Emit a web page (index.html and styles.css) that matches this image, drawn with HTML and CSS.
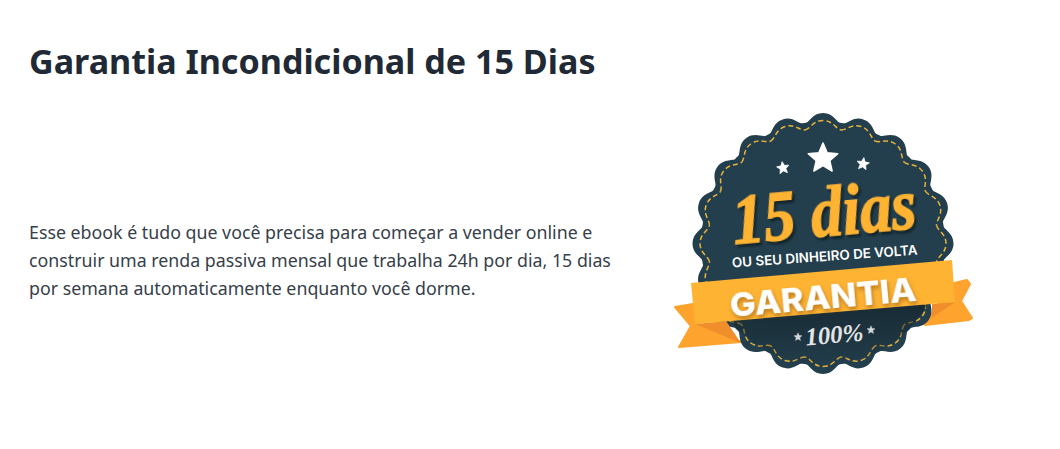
FILE: index.html
```html
<html>

<head>
    <meta charset="utf-8">
    <link rel="stylesheet" href="styles.css">
</head>

<body>
    <div class="section">
        <h1>Garantia Incondicional de 15 Dias</h1>
        <div class="row">
            <p>Esse ebook é tudo que você precisa para começar a vender online e construir uma renda passiva mensal que trabalha 24h por dia, 15 dias por semana automaticamente enquanto você dorme.</p>
            <svg class="badge" viewBox="668 108 310 270" width="310" height="270">
                <defs>
                    <path id="bump" class="navy" d="M-18.9 -119.5C-13.9 -120.3 -11 -130.5 0 -130.5C11 -130.5 13.9 -120.3 18.9 -119.5Z" />
                    <path id="stitch" class="stitch" d="M-18 -113.6C-13 -114.4 -10 -123 0 -123C10 -123 13 -114.4 18 -113.6" />
                    <polygon id="star" class="star" points="0,-10 2.7,-3.72 9.51,-3.09 4.37,1.42 5.88,8.09 0,4.6 -5.88,8.09 -4.37,1.42 -9.51,-3.09 -2.7,-3.72" />
                    <g id="wave">
                        <use href="#bump" />
                        <use href="#stitch" />
                    </g>
                    <linearGradient id="under" x1="0" y1="0" x2="0" y2="1">
                        <stop offset="0" stop-color="#13232b" stop-opacity=".75" />
                        <stop offset="1" stop-color="#13232b" stop-opacity="0" />
                    </linearGradient>
                    <clipPath id="seal">
                        <circle cx="823" cy="243.5" r="121" />
                    </clipPath>
                </defs>

                <polygon class="tail" points="675,307 693,304 697,323 741,342 679,347 691,326" />
                <polygon class="tail" points="950,284 967,280 970,284 961,301 972,318 969,320 925,325" />

                <g transform="translate(823 243.5)">
                    <circle class="navy" r="122" />
                    <use href="#wave" />
                    <use href="#wave" transform="rotate(18)" />
                    <use href="#wave" transform="rotate(36)" />
                    <use href="#wave" transform="rotate(54)" />
                    <use href="#wave" transform="rotate(72)" />
                    <use href="#wave" transform="rotate(90)" />
                    <use href="#wave" transform="rotate(108)" />
                    <use href="#wave" transform="rotate(126)" />
                    <use href="#wave" transform="rotate(144)" />
                    <use href="#wave" transform="rotate(162)" />
                    <use href="#wave" transform="rotate(180)" />
                    <use href="#wave" transform="rotate(198)" />
                    <use href="#wave" transform="rotate(216)" />
                    <use href="#wave" transform="rotate(234)" />
                    <use href="#wave" transform="rotate(252)" />
                    <use href="#wave" transform="rotate(270)" />
                    <use href="#wave" transform="rotate(288)" />
                    <use href="#wave" transform="rotate(306)" />
                    <use href="#wave" transform="rotate(324)" />
                    <use href="#wave" transform="rotate(342)" />
                </g>

                <polygon points="695,324 955,302 955,350 695,372" fill="url(#under)" clip-path="url(#seal)" />

                <polygon class="fold" points="695,324 741,343 726,321" />
                <polygon class="fold" points="955,302 932,318 932,304" />
                <polygon class="band" points="691,283 952,260 955,302 695,324" />

                <use href="#star" transform="translate(823 158.5) scale(1.55)" />
                <use href="#star" transform="translate(783 168) rotate(-8) scale(.65)" />
                <use href="#star" transform="translate(863 164) rotate(8) scale(.65)" />

                <text class="days" transform="translate(826 236) rotate(-5)" text-anchor="middle" textLength="184" lengthAdjust="spacingAndGlyphs">15 dias</text>
                <text class="back" transform="translate(825 261) rotate(-4)" text-anchor="middle" textLength="186" lengthAdjust="spacingAndGlyphs">OU SEU DINHEIRO DE VOLTA</text>
                <text class="title" transform="translate(824 309) rotate(-5)" text-anchor="middle" textLength="187" lengthAdjust="spacingAndGlyphs">GARANTIA</text>
                <text class="percent" transform="translate(835 343) rotate(-5)" text-anchor="middle">100%</text>
                <use href="#star" class="mini" transform="translate(798 337) scale(.42)" />
                <use href="#star" class="mini" transform="translate(871 330) scale(.42)" />
            </svg>
        </div>
    </div>
</body>

</html>
```
FILE: styles.css
```css
body {
    margin: 0;
    background: #fff;
    color: #36404a;
    font-family: "Noto Sans", sans-serif;
}

.section {
    padding: 30px 0 0 29px;
}

h1 {
    margin: 0 0 16px;
    color: #1f2a36;
    font-size: 34.1px;
    font-weight: 700;
    line-height: 62px;
}

.row {
    display: flex;
    align-items: center;
}

p {
    width: 585px;
    margin: 34px 54px 0 0;
    font-size: 17.8px;
    line-height: 28px;
}

.badge {
    display: block;
    flex: none;
}

.navy {
    fill: #233f4d;
}

.stitch {
    fill: none;
    stroke: #e8b23c;
    stroke-width: 1.5;
    stroke-dasharray: 5 3;
}

.star {
    fill: #fff;
    stroke: #fff;
    stroke-width: 1;
    stroke-linejoin: round;
}

.mini {
    opacity: .8;
}

.tail {
    fill: #fda32e;
    stroke: #fda32e;
    stroke-width: 2;
    stroke-linejoin: round;
}

.fold {
    fill: #ef8e2b;
}

.band {
    fill: #ffb333;
}

.days {
    fill: #ffb333;
    stroke: #ffb333;
    stroke-width: 1.6;
    font-family: "Liberation Serif", serif;
    font-size: 72px;
    font-style: italic;
    font-weight: 700;
    filter: drop-shadow(2px 3px 1px rgba(10, 25, 32, .7));
}

.back {
    fill: #fff;
    font-family: Inter, sans-serif;
    font-size: 13.5px;
    font-weight: 600;
}

.title {
    fill: #fff;
    font-family: Inter, sans-serif;
    font-size: 33px;
    font-weight: 800;
    filter: drop-shadow(1px 3px 2px rgba(120, 70, 10, .5));
}

.percent {
    fill: #e4e4e4;
    font-family: "Liberation Serif", serif;
    font-size: 25px;
    font-style: italic;
    font-weight: 700;
}
```
